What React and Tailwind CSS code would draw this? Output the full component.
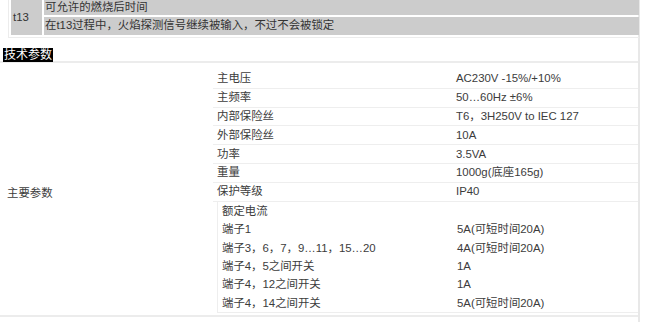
import React from "react";

const mainRows = [
    ["主电压", "AC230V -15%/+10%"],
    ["主频率", "50…60Hz ±6%"],
    ["内部保险丝", "T6，3H250V to IEC 127"],
    ["外部保险丝", "10A"],
    ["功率", "3.5VA"],
    ["重量", "1000g(底座165g)"],
    ["保护等级", "IP40"],
];

const currentRows = [
    ["额定电流", ""],
    ["端子1", "5A(可短时间20A)"],
    ["端子3，6，7，9…11，15…20", "4A(可短时间20A)"],
    ["端子4，5之间开关", "1A"],
    ["端子4，12之间开关", "1A"],
    ["端子4，14之间开关", "5A(可短时间20A)"],
];

export default function App() {
    return (
        <div
            className="w-[650px] h-[322px] bg-white overflow-hidden text-[11.4px] text-[#3c3c3c]"
            style={{ fontFamily: '"Liberation Sans", "Noto Sans CJK SC", sans-serif' }}
        >
            <div className="w-[640px] h-full border-r-2 border-[#e8e8e8]">
                {/* t13 block */}
                <div className="ml-[8px] w-[631px] h-[38px] border-l border-b border-[#ececec] pl-[2px] flex gap-[2px] text-[#333]">
                    <div className="w-[31px] h-[35px] bg-[#cccccc] flex items-center pl-[2px]">t13</div>
                    <div className="flex-1 flex flex-col gap-[2px]">
                        <div className="h-[15px] bg-[#cccccc] flex items-center pl-[1px] leading-none">可允许的燃烧后时间</div>
                        <div className="h-[18px] bg-[#cccccc] flex items-center pl-[1px] leading-none">
                            在t13过程中，火焰探测信号继续被输入，不过不会被锁定
                        </div>
                    </div>
                </div>

                {/* 技术参数 */}
                <div className="h-[25px] border-b-2 border-[#ececec] pt-[9px] pl-[3px]">
                    <span className="inline-flex items-center h-[14px] px-[1px] bg-black text-white text-[12px] leading-none">技术参数</span>
                </div>

                {/* main table */}
                <div className="flex h-[254px] border-b-2 border-[#ececec]">
                    <div className="w-[213px] flex items-center pl-[7px] pt-[10px]">主要参数</div>
                    <div className="flex-1 pt-[7px]">
                        {mainRows.map(([k, v]) => (
                            <div key={k} className="flex h-[18.8px] items-center border-b border-[#eeeeee]">
                                <div className="w-[239px] pl-[4px]">{k}</div>
                                <div className="flex-1 pl-[4px]">{v}</div>
                            </div>
                        ))}
                        <div className="ml-[4px] h-[111px] border-l border-b border-[#eeeeee] pt-[1px]">
                            {currentRows.map(([k, v]) => (
                                <div key={k} className="flex h-[18.3px] items-center">
                                    <div className="w-[235px] pl-[4px]">{k}</div>
                                    <div className="flex-1 pl-[4px]">{v}</div>
                                </div>
                            ))}
                        </div>
                    </div>
                </div>
            </div>
        </div>
    );
}
